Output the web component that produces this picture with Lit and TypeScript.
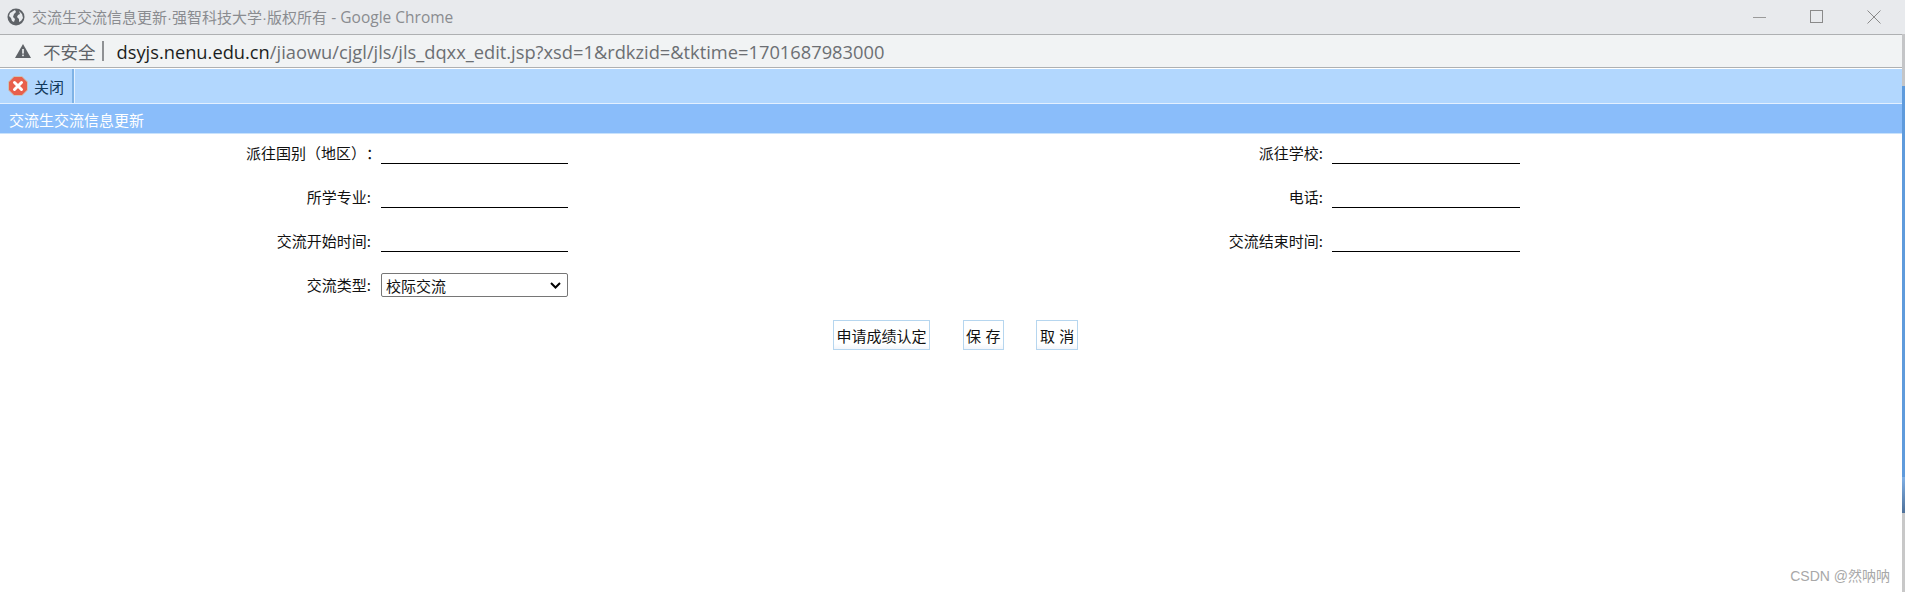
import { LitElement, html, css } from "lit";
import { customElement } from "lit/decorators.js";

@customElement("app-root")
export class AppRoot extends LitElement {
  static styles = css`
    :host { display: block; width: 1905px; height: 592px; background: #fff; position: relative; overflow: hidden; font-family: "Noto Sans CJK SC", "Liberation Sans", sans-serif; color: #111; }
    .titlebar { height: 34px; box-sizing: border-box; background: #e8eaed; display: flex; align-items: center; padding: 0 3px 0 7px; gap: 7px; font-size: 15px; color: #8a8c90; }
    .titlebar .t { flex: 1; white-space: nowrap; font-family: "Liberation Sans", "Noto Sans CJK SC", sans-serif; padding-bottom: 1px; }
    .titlebar .g { font-family: "Open Sans", sans-serif; font-size: 15.5px; }
    .win { display: flex; align-items: center; height: 34px; }
    .win svg { display: block; }
    .win .slot { width: 57px; display: flex; justify-content: center; }
    .addr { height: 34px; box-sizing: border-box; border-top: 1px solid #aeb0b2; border-bottom: 1px solid #aeb0b2; background: #f1f3f4; display: flex; align-items: center; padding-left: 15px; font-size: 18px; }
    .addr .warn { width: 16px; height: 14px; margin-right: 12px; display: block; }
    .addr .ns { color: #5f6368; font-size: 17.5px; }
    .addr .sep { width: 2px; height: 20px; background: #8f9194; margin: 0 12.5px 0 6.5px; }
    .addr .url { font-family: "Open Sans", "Liberation Sans", sans-serif; color: #6c6f73; font-size: 18.3px; white-space: nowrap; }
    .addr .url b { font-weight: 400; color: #1c1e21; }
    .toolbar { margin-top: 1px; height: 34px; background: #b2d7fe; display: flex; align-items: stretch; box-sizing: border-box; }
    .closebtn { width: 74px; display: flex; align-items: center; gap: 6px; padding-left: 8px; box-sizing: border-box; border-right: 2px solid #7fb3e6; font-size: 15px; color: #123a5c; }
    .edge { width: 1px; background: #e3f0ff; }
    .head { border-top: 1px solid #e3f0ff; border-bottom: 1px solid #c9e2fb; height: 28px; padding-top: 1px; background: #8abdfa; color: #fff; font-size: 15px; display: flex; align-items: center; padding-left: 9px; }
    .form { display: grid; grid-template-columns: 371px 10px 187px 431px 324px 9px 188px; grid-auto-rows: 44px; font-size: 15px; }
    .lbl { text-align: right; line-height: 38px; white-space: nowrap; }
    .full { grid-column: span 2; font-kerning: none; text-spacing-trim: space-all; font-feature-settings: "palt" 0, "halt" 0, "chws" 0; }
    .inp { border: 0; border-bottom: 1px solid #000; height: 29px; box-sizing: content-box; background: transparent; padding: 0; outline: none; min-width: 0; }
    select { appearance: none; -webkit-appearance: none; grid-column: 3; width: 187px; height: 24px; margin-top: 7px; font-size: 15px; font-family: "Noto Sans CJK SC", sans-serif; border: 1px solid #767676; border-radius: 2px; padding: 0 0 0 4px; color: #111; background: #fff url("data:image/svg+xml,%3Csvg xmlns='http://www.w3.org/2000/svg' width='11' height='7'%3E%3Cpath d='M1 1l4.500 4.500L10 1' fill='none' stroke='%23000' stroke-width='2'/%3E%3C/svg%3E") no-repeat right 6px center; }
    .btns { display: flex; gap: 32.5px; padding-left: 833px; margin-top: 10px; }
    button { height: 30px; box-sizing: border-box; padding: 0 2.5px; border: 1px solid #b6d6ef; background: linear-gradient(#fff 80%, #f3f6fb); font-family: "Noto Sans CJK SC", sans-serif; font-size: 15px; word-spacing: 1px; color: #111; }
    .wm { position: absolute; right: 15px; bottom: 7px; font-size: 14px; color: #a8a8a8; font-family: "Liberation Sans", "Noto Sans CJK SC", sans-serif; }
    .rail { position: absolute; right: 0; top: 34px; width: 3px; height: 52px; background: #c4c5c7; }
    .rail2 { position: absolute; right: 0; top: 86px; width: 3px; height: 391px; background: #5f9bdc; }
    .rail3 { position: absolute; right: 0; top: 477px; width: 3px; height: 36px; background: linear-gradient(#7fb0e6, #4f7199); }
    .rail4 { position: absolute; right: 0; top: 513px; width: 3px; height: 79px; background: #c8c8c8; }
  `;

  render() {
    return html`
      <div class="titlebar">
        <svg width="18" height="18" viewBox="0 0 18 18"><circle cx="9" cy="9" r="8.500" fill="#5f6368"/><path d="M3 5c2-1 3-2 5-3l1 2-2 2-1 3 2 2-1 3-2-1-1-3-2-2zM12 3l3 3 1 4-2 3-2 1 0-3-2-2 1-2 2-1z" fill="#e8eaed"/></svg>
        <span class="t">交流生交流信息更新·强智科技大学·版权所有 - <span class="g">Google Chrome</span></span>
        <div class="win">
          <div class="slot"><svg width="14" height="14"><path d="M0 7.500h13" stroke="#9a9a9a"/></svg></div>
          <div class="slot"><svg width="14" height="14"><rect x=".5" y=".5" width="12" height="12" fill="none" stroke="#8a8a8a"/></svg></div>
          <div class="slot"><svg width="14" height="14"><path d="M.5.5l13 13M13.500.5l-13 13" stroke="#8a8a8a"/></svg></div>
        </div>
      </div>
      <div class="addr">
        <svg class="warn" viewBox="0 0 16 14"><path d="M8 0l8 14H0z" fill="#5f6368"/><rect x="7.200" y="5" width="1.600" height="4.600" fill="#f1f3f4"/><rect x="7.200" y="10.600" width="1.600" height="1.600" fill="#f1f3f4"/></svg>
        <span class="ns">不安全</span><span class="sep"></span>
        <span class="url"><b>dsyjs.nenu.edu.cn</b>/jiaowu/cjgl/jls/jls_dqxx_edit.jsp?xsd=1&amp;rdkzid=&amp;tktime=1701687983000</span>
      </div>
      <div class="toolbar">
        <div class="closebtn">
          <svg width="20" height="20" viewBox="0 0 20 20"><path d="M6 .5h8L19.500 6v8L14 19.500H6L.5 14V6z" fill="#e8604c" stroke="#c9c4b8"/><path d="M6.500 6.500l7 7M13.500 6.500l-7 7" stroke="#fff" stroke-width="3" stroke-linecap="round"/></svg>
          <span>关闭</span>
        </div>
        <div class="edge"></div>
      </div>
      <div class="head">交流生交流信息更新</div>
      <div class="form">
        <div class="lbl full">派往国别（地区）：</div><input class="inp" /><div></div>
        <div class="lbl">派往学校:</div><div></div><input class="inp" />
        <div class="lbl">所学专业:</div><div></div><input class="inp" /><div></div>
        <div class="lbl">电话:</div><div></div><input class="inp" />
        <div class="lbl">交流开始时间:</div><div></div><input class="inp" /><div></div>
        <div class="lbl">交流结束时间:</div><div></div><input class="inp" />
        <div class="lbl">交流类型:</div><div></div><select><option>校际交流</option></select>
      </div>
      <div class="btns">
        <button>申请成绩认定</button><button>保 存</button><button>取 消</button>
      </div>
      <div class="wm">CSDN @然呐呐</div>
      <div class="rail"></div><div class="rail2"></div><div class="rail3"></div><div class="rail4"></div>
    `;
  }
}
